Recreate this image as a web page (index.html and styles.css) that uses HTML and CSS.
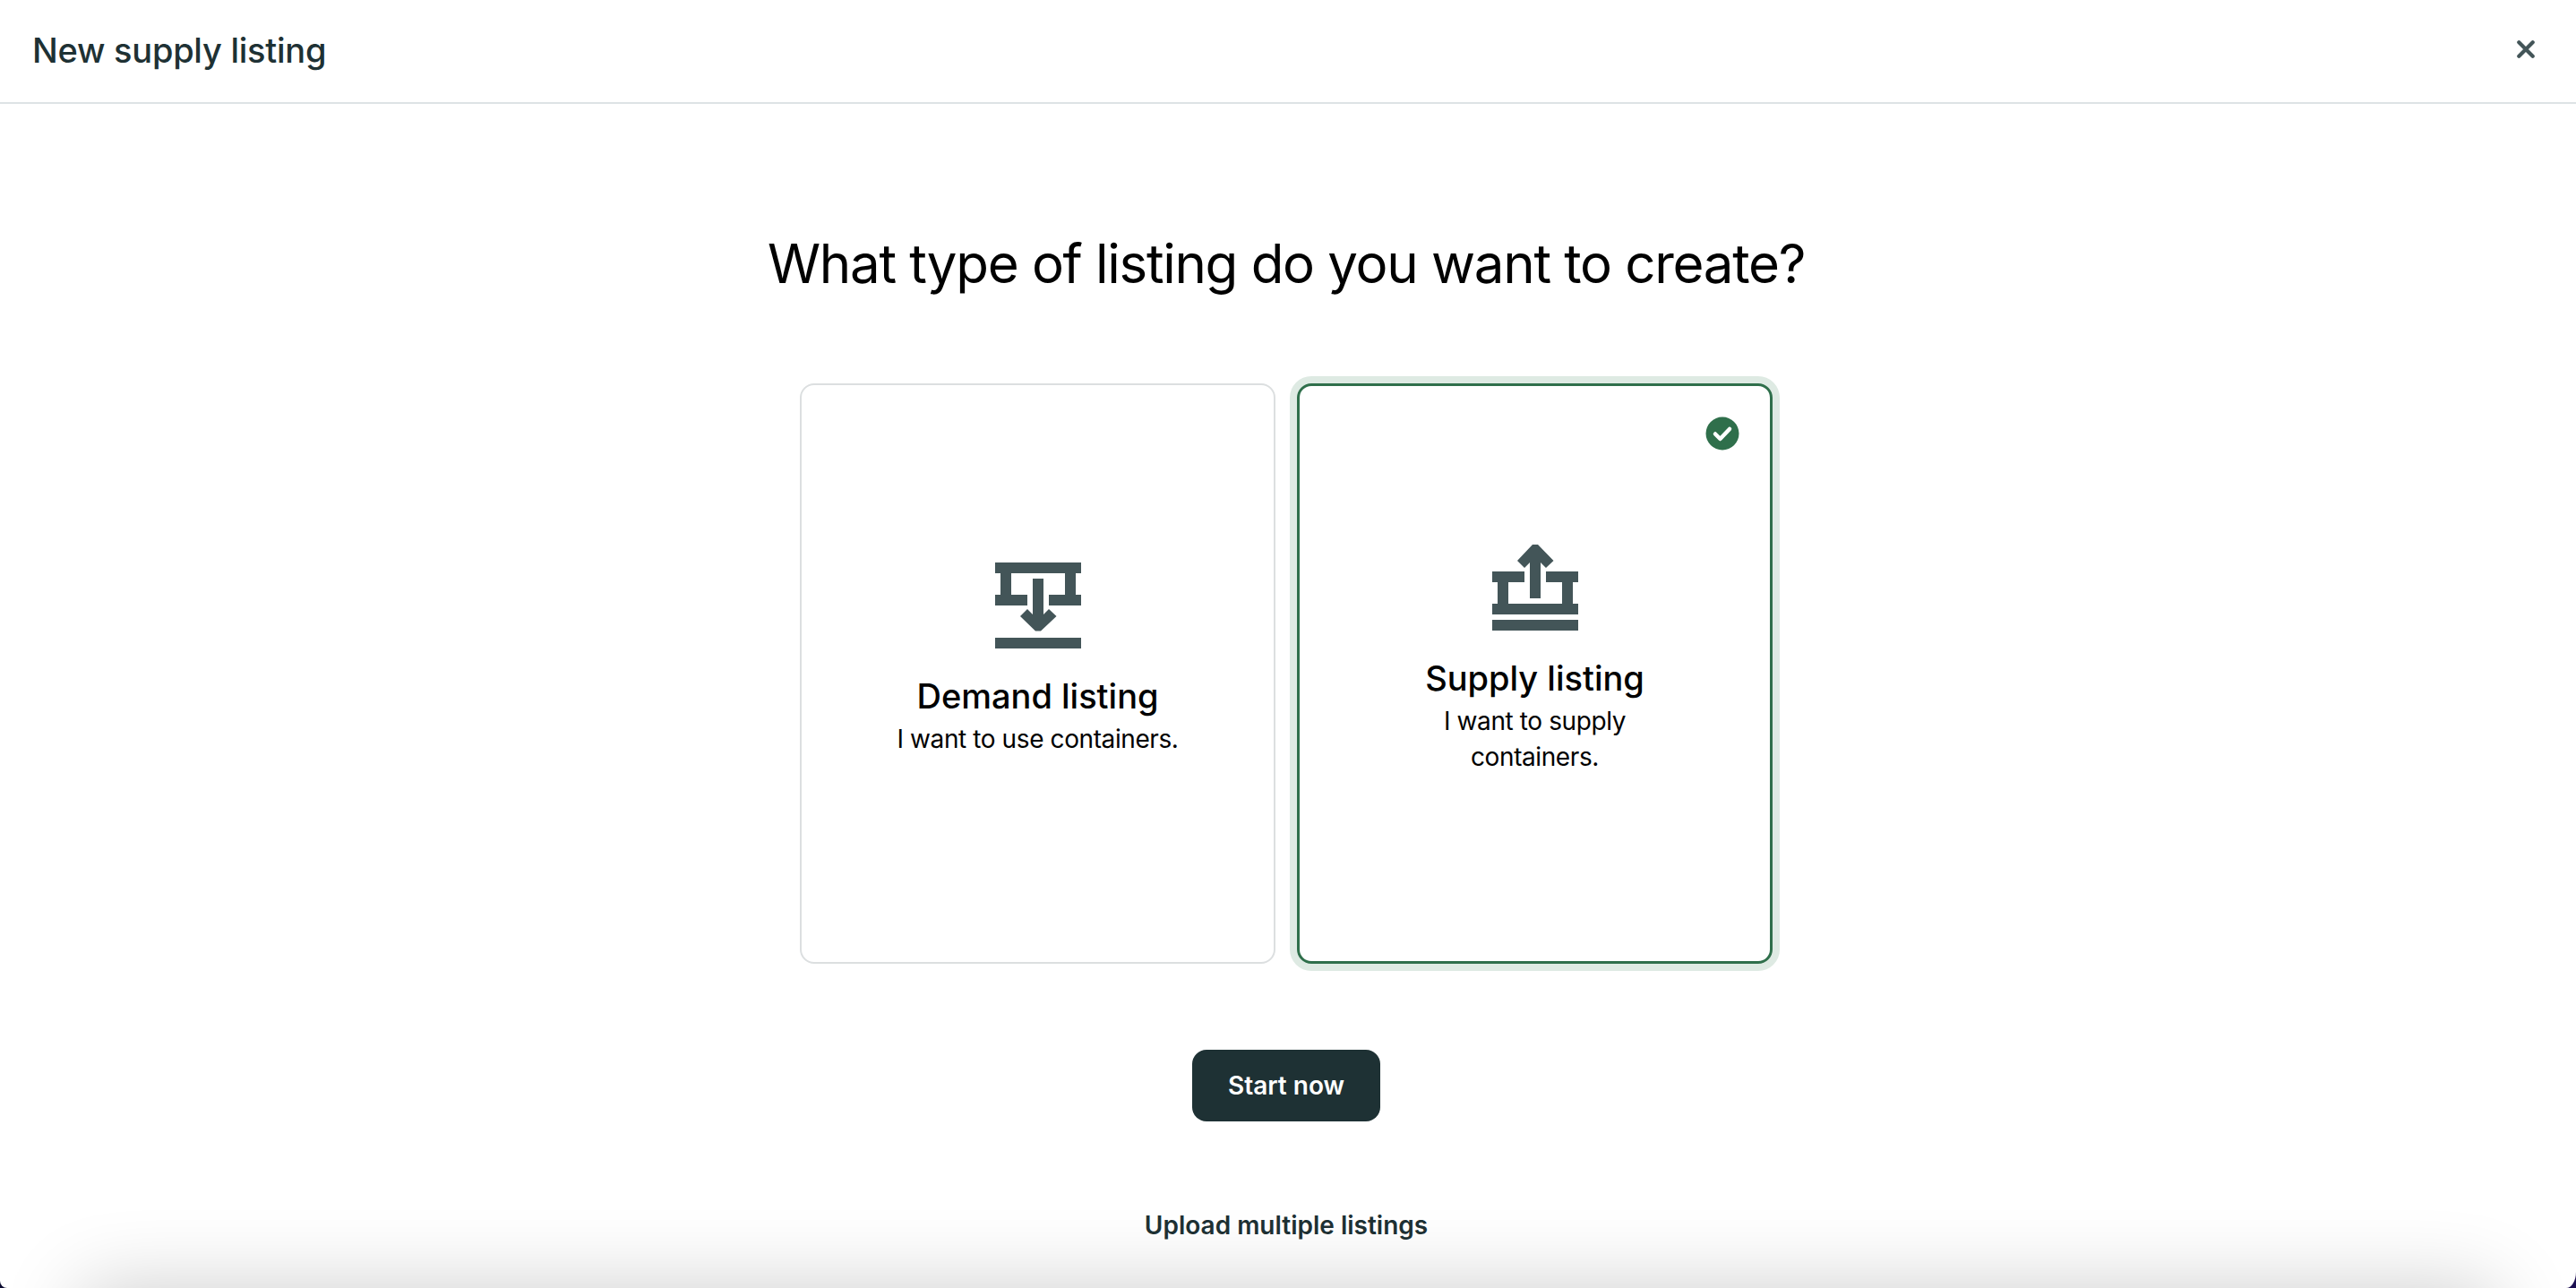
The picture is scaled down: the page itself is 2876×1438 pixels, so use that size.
FILE: index.html
```html
<!DOCTYPE html>
<html lang="en">
<head>
    <meta charset="UTF-8">
    <title>New supply listing</title>
    <link rel="stylesheet" href="styles.css">
</head>
<body>
    <div class="modal">
        <header class="modal-header">
            <h1 class="modal-title">New supply listing</h1>
            <button class="close-btn" aria-label="Close">
                <svg width="20" height="20" viewBox="0 0 20 20">
                    <path d="M2.300 2.300 L17.700 17.700 M17.700 2.300 L2.300 17.700" stroke="#435558" stroke-width="4.200" stroke-linecap="round" fill="none"/>
                </svg>
            </button>
        </header>

        <main class="modal-body">
            <h2 class="question">What type of listing do you want to create?</h2>

            <div class="options">
                <div class="option">
                    <svg class="option-icon" width="96" height="96" viewBox="0 0 96 96">
                        <path d="M0 0H96V12H90V36H96V48H60V36H78V12H18V36H36V48H0V36H6V12H0Z"/>
                        <path d="M42 18H54V58L60 52L68.500 60L51 76.500H45L28 60L36 52L42 58Z"/>
                        <rect x="0" y="84" width="96" height="12"/>
                    </svg>
                    <div class="option-title">Demand listing</div>
                    <div class="option-text">I want to use containers.</div>
                </div>

                <div class="option selected">
                    <svg class="check" width="38" height="38" viewBox="0 0 38 38">
                        <circle cx="19" cy="19" r="18.500" fill="#2f6f4b"/>
                        <path d="M11 19.500L16.500 25L27 14" stroke="#fff" stroke-width="4.500" stroke-linecap="round" stroke-linejoin="round" fill="none"/>
                    </svg>
                    <svg class="option-icon" width="96" height="96" viewBox="0 0 96 96">
                        <path d="M45 0H51L68.500 18L60 26L54 20V60H42V20L36 26L28 18Z"/>
                        <path d="M0 30H36V42H18V66H78V42H60V30H96V42H90V66H96V78H0V66H6V42H0Z"/>
                        <rect x="0" y="84" width="96" height="12"/>
                    </svg>
                    <div class="option-title">Supply listing</div>
                    <div class="option-text">I want to supply<br>containers.</div>
                </div>
            </div>

            <button class="start-btn">Start now</button>
            <a class="upload-link">Upload multiple listings</a>
        </main>

        <div class="bottom-shade"></div>
    </div>
</body>
</html>
```

FILE: styles.css
```css
html, body {
    height: 100%;
}

body {
    margin: 0;
    background: linear-gradient(to right, #0b0b30, #1c0f52);
    font-family: Inter, "Noto Sans", sans-serif;
    overflow: hidden;
}

.modal {
    position: relative;
    height: 100%;
    background-color: #fff;
    border-radius: 0 0 11px 8px / 0 0 18px 8px;
    overflow: hidden;
    display: flex;
    flex-direction: column;
}

.modal-header {
    height: 112px;
    flex-shrink: 0;
    border-bottom: 2px solid #dde3e5;
    padding: 0 46px 2px 36px;
    display: flex;
    justify-content: space-between;
    align-items: center;
}

.modal-title {
    margin: 0;
    font-size: 38px;
    letter-spacing: -0.25px;
    font-weight: 500;
    color: #1e3134;
}

.close-btn {
    border: none;
    background: none;
    padding: 0;
    display: flex;
    margin-bottom: 2px;
}

.modal-body {
    display: flex;
    flex-direction: column;
    align-items: center;
    padding-right: 4px;
}

.question {
    margin: 138px 0 0;
    height: 80px;
    line-height: 80px;
    font-size: 60px;
    letter-spacing: -1.3px;
    font-weight: 400;
    color: #000;
}

.options {
    display: flex;
    gap: 24px;
    margin-top: 94px;
}

.option {
    position: relative;
    width: 531px;
    height: 648px;
    box-sizing: border-box;
    padding-bottom: 31px;
    border: 2px solid #dcdfe0;
    border-radius: 16px;
    display: flex;
    flex-direction: column;
    align-items: center;
    justify-content: center;
    text-align: center;
}

.option.selected {
    border: 3px solid #2f6f4b;
    box-shadow: 0 0 0 8px #deeae3;
}

.option-icon {
    fill: #435558;
}

.check {
    position: absolute;
    top: 34px;
    right: 34px;
}

.option-title {
    margin-top: 29px;
    margin-bottom: 4px;
    font-size: 38px;
    line-height: 48px;
    font-weight: 500;
    color: #000;
}

.option-text {
    font-size: 28px;
    letter-spacing: -0.4px;
    line-height: 40px;
    color: #000;
}

.start-btn {
    margin-top: 96px;
    width: 210px;
    height: 80px;
    border: none;
    border-radius: 16px;
    background-color: #1e3134;
    color: #fff;
    font-family: inherit;
    font-size: 28px;
    font-weight: 600;
}

.upload-link {
    margin-top: 96px;
    font-size: 28px;
    line-height: 40px;
    font-weight: 600;
    color: #1e3134;
}

/* shadow of a bar just under the fold */
.bottom-shade {
    position: absolute;
    left: 90px;
    right: 90px;
    bottom: -200px;
    height: 200px;
    box-shadow: 0 0 90px rgba(0, 0, 0, 0.2);
}
```
